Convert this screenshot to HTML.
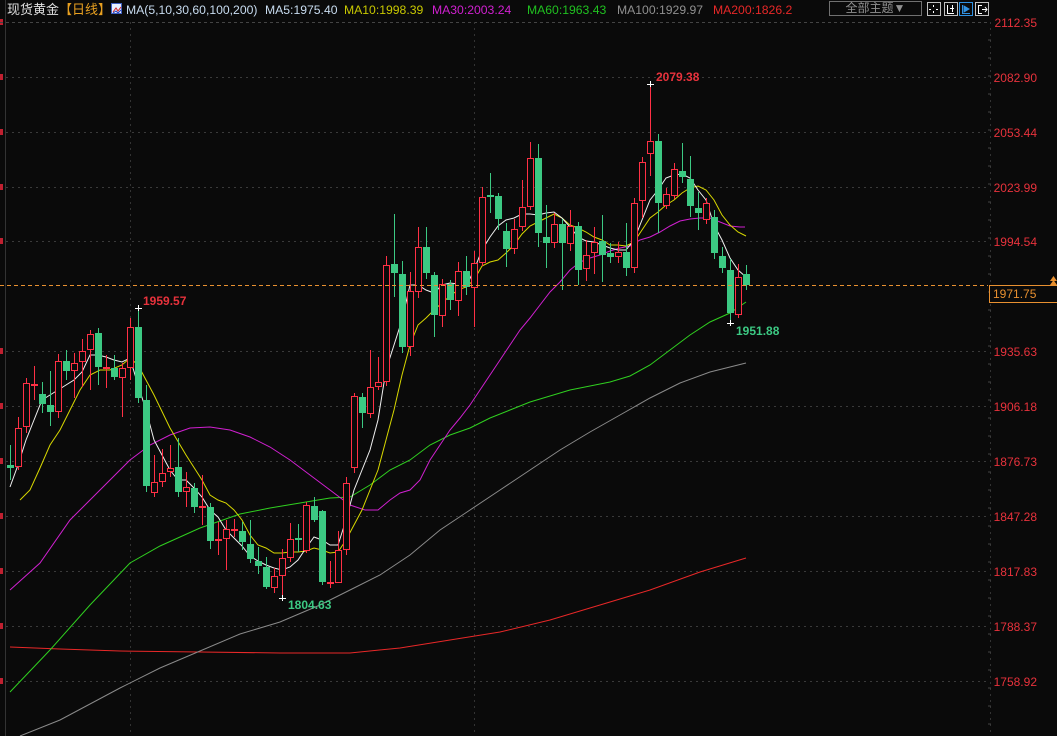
<!DOCTYPE html>
<html><head><meta charset="utf-8">
<style>
html,body{margin:0;padding:0;background:#0a0a0a;}
body{width:1057px;height:736px;overflow:hidden;position:relative;font-family:"Liberation Sans","Noto Sans CJK SC",sans-serif;}
svg{position:absolute;left:0;top:0;}
.t{position:absolute;top:2px;font-size:12.2px;white-space:nowrap;line-height:16px;}
</style></head><body>
<svg id="s" width="1057" height="736" xmlns="http://www.w3.org/2000/svg"></svg>
<div class="t" style="left:7px;color:#e0e0e0;font-size:13px">现货黄金<span style="color:#e8a020">【日线】</span></div>
<div style="position:absolute;left:111px;top:3px;width:11px;height:11px;background:#e8f0ff;border:1px solid #4060c0;box-sizing:border-box;"><svg width="11" height="11" style="position:absolute;left:0;top:0"><polyline points="1,8 4,4 6,7 9,3" stroke="#d02020" fill="none" stroke-width="1"/><polyline points="1,9 4,7 6,9 9,6" stroke="#2040c0" fill="none" stroke-width="1"/></svg></div>
<div class="t" style="left:126px;color:#c8dcf0">MA(5,10,30,60,100,200)</div>
<div class="t" style="left:265px;color:#c8dcf0">MA5:1975.40</div>
<div class="t" style="left:344px;color:#c8c800">MA10:1998.39</div>
<div class="t" style="left:432px;color:#d020d0">MA30:2003.24</div>
<div class="t" style="left:527px;color:#20c020">MA60:1963.43</div>
<div class="t" style="left:617px;color:#909090">MA100:1929.97</div>
<div class="t" style="left:713px;color:#e82828">MA200:1826.2</div>
<div style="position:absolute;left:829px;top:1px;width:93px;height:15px;border:1px solid #707070;box-sizing:border-box;color:#909090;font-size:12px;line-height:13px;text-align:center;font-family:'Liberation Sans','Noto Sans CJK SC',sans-serif;">全部主题▼</div>
<script>
var s=document.getElementById('s');var h='';
var H=[22,77,132,187,241,351,406,461,516,571,626,681];
var L=['2112.35','2082.90','2053.44','2023.99','1994.54','1935.63','1906.18','1876.73','1847.28','1817.83','1788.37','1758.92'];
for(var i=0;i<H.length;i++){h+='<line x1="6" y1="'+(H[i]+0.5)+'" x2="988" y2="'+(H[i]+0.5)+'" stroke="#3a3a3a" stroke-dasharray="2,4"/>';
h+='<text x="1037" y="'+(H[i]+5)+'" fill="#e8323c" font-size="12" text-anchor="end" font-family="Liberation Sans">'+L[i]+'</text>';
h+='<rect x="0" y="'+(H[i]-3)+'" width="3" height="6" fill="#c02030"/>';}
h+='<line x1="0" y1="22.5" x2="988" y2="22.5" stroke="#444" stroke-dasharray="3,3"/>';
h+='<line x1="130.5" y1="22" x2="130.5" y2="736" stroke="#333" stroke-dasharray="2,4"/>';
h+='<line x1="474.5" y1="22" x2="474.5" y2="736" stroke="#333" stroke-dasharray="2,4"/>';
h+='<line x1="5.5" y1="0" x2="5.5" y2="736" stroke="#333"/>';
h+='<line x1="990.5" y1="22" x2="990.5" y2="736" stroke="#333" stroke-dasharray="2,4"/>';
for(var y=40;y<736;y+=18){h+='<line x1="988" y1="'+y+'" x2="991" y2="'+y+'" stroke="#444"/>';}
function pl(p,c){h+='<polyline points="'+p+'" fill="none" stroke="'+c+'" stroke-width="1"/>';}
pl('10,647 60,649 120,651 200,652 280,653 350,653 400,648 450,640 500,632 550,620 600,605 650,590 700,572 746,558','#e82828');
pl('20,736 60,720 120,688 160,668 200,651 240,634 280,622 320,605 350,590 380,575 410,555 440,530 470,510 500,490 530,470 560,450 590,432 620,415 650,398 680,383 710,372 746,363','#8a8a8a');
pl('10,692 50,650 90,605 130,563 160,546 200,528 240,514 270,508 300,503 330,498 350,497 370,485 390,470 410,460 430,445 450,435 470,428 490,418 510,410 530,402 550,396 570,390 590,386 610,382 630,376 650,365 670,350 690,335 710,322 730,313 746,302','#30d020');
pl('10,590 40,563 70,520 90,500 110,480 130,460 150,445 170,435 190,428 210,427 230,430 250,437 270,447 290,460 310,475 330,490 350,505 365,510 378,510 390,500 400,493 410,490 420,480 430,460 440,445 450,430 460,418 470,405 480,390 490,375 500,360 510,345 520,330 530,318 540,305 550,292 560,282 570,270 580,262 590,258 600,255 610,251 620,248 630,246 640,240 650,237 660,232 670,226 680,221 690,219 700,218 710,218 720,222 730,226 740,227 745,227','#d020d0');
pl('20,500 30,490 40,468 50,445 60,430 70,410 80,390 90,375 100,370 110,370 122,365 130,358 138,365 146,380 154,395 170,428 186,455 202,480 210,495 218,500 226,503 234,510 242,520 250,535 258,545 266,548 274,553 282,553 290,552 298,552 306,551 314,548 322,550 330,553 338,552 346,540 354,525 362,510 370,490 378,470 386,440 394,410 402,375 410,345 418,325 426,318 434,310 442,303 450,296 458,290 466,287 474,280 482,266 490,262 498,260 506,253 514,245 522,234 530,226 538,222 546,218 554,214 562,218 570,225 578,228 586,232 594,237 602,240 610,245 618,245 626,246 634,242 642,230 650,218 658,212 666,205 674,200 682,193 690,188 698,186 706,190 714,200 722,215 730,225 738,232 746,236','#d8d800');
pl('10,487 18,465 26,440 34,420 42,400 50,395 58,390 66,385 74,380 82,372 90,355 98,355 106,357 114,360 122,362 130,358 138,385 146,410 154,440 162,455 170,470 178,480 186,480 194,488 202,497 210,510 218,517 226,530 234,538 242,546 250,556 258,561 266,565 274,568 282,570 290,567 298,560 306,548 314,537 322,540 330,545 338,545 346,520 354,490 362,470 370,450 378,420 386,370 394,345 402,320 410,285 418,285 426,290 434,293 442,285 450,283 458,284 466,287 474,270 482,250 490,237 498,226 506,220 514,218 522,214 530,214 538,215 546,213 554,212 562,218 570,227 578,237 586,241 594,242 602,245 610,248 618,250 626,250 634,240 642,220 650,200 658,190 666,178 674,175 682,174 690,178 698,190 706,200 714,225 722,240 730,258 738,270 746,277','#f0f0f0');
var C=[[0,465,468,445,480],[1,428,467,417,470],[1,383,427,378,433],[1,384,386,366,400],[0,394,404,382,413],[0,405,412,371,426],[1,361,412,354,418],[0,361,371,350,380],[1,363,371,353,398],[1,351,362,339,387],[1,334,350,330,390],[0,333,367,328,385],[1,367,369,355,388],[0,368,377,355,380],[1,368,378,363,417],[1,327,368,318,380],[0,327,398,308,403],
[0,400,486,385,492],[1,482,493,455,497],[1,473,482,449,487],[1,468,472,445,477],[0,467,492,438,497],[1,487,492,472,507],[0,488,507,483,513],[1,506,508,475,525],[0,507,541,503,549],[1,539,541,522,555],[1,529,539,520,570],[1,529,531,519,537],[0,531,542,522,550],[0,544,559,520,563],[0,561,566,547,574],[0,567,587,557,589],[1,576,588,568,593],[1,558,576,549,598],[1,539,558,523,562],[0,538,540,524,552],[1,505,551,502,553],[0,506,520,497,522],[0,511,582,510,585],[1,582,584,561,588],[1,550,583,531,583],[1,483,550,477,555],
[1,396,468,393,473],[0,397,413,393,428],[1,387,414,350,418],[1,382,387,357,390],[1,265,382,256,386],[0,264,273,214,297],[0,274,347,261,353],[1,291,347,272,356],[1,247,292,227,298],[0,247,273,227,279],[0,275,315,272,337],[1,284,316,279,327],[0,284,300,280,310],[1,271,301,262,316],[0,271,287,256,295],[1,263,288,251,327],[1,197,263,187,266],[0,195,197,173,213],[0,196,219,193,230],[0,231,249,223,267],[1,229,249,219,254],[1,207,227,180,231],[1,158,207,142,210],[0,158,233,144,247],[0,237,243,205,268],[1,224,243,213,248],
[0,224,243,219,290],[1,226,244,210,251],[0,226,270,222,285],[1,255,269,240,281],[1,242,253,227,274],[0,241,255,215,282],[0,253,257,243,263],[1,252,257,242,263],[0,252,268,223,276],[1,203,268,198,273],[1,162,201,157,218],[1,141,154,84,176],[0,141,203,134,233],[1,194,206,188,209],[1,169,196,163,199],[0,171,177,143,183],[0,179,206,156,217],[0,208,213,192,230],[1,203,220,198,224],[0,217,253,210,259],[0,256,268,247,273],[0,270,313,259,323],[1,277,315,264,318],[0,274,285,265,290]];
for(var i=0;i<C.length;i++){var c=C[i];var x=10+i*8;var col=c[0]?'#ff3045':'#3cc983';
h+='<line x1="'+(x+0.5)+'" y1="'+c[3]+'" x2="'+(x+0.5)+'" y2="'+c[1]+'" stroke="'+col+'"/>';
h+='<line x1="'+(x+0.5)+'" y1="'+c[2]+'" x2="'+(x+0.5)+'" y2="'+c[4]+'" stroke="'+col+'"/>';
var bh=Math.max(1,c[2]-c[1]);
if(c[0]){h+='<rect x="'+(x-2.5)+'" y="'+(c[1]+0.5)+'" width="6" height="'+Math.max(0.5,bh-1)+'" fill="#0a0a0a" stroke="'+col+'"/>';}
else{h+='<rect x="'+(x-3)+'" y="'+c[1]+'" width="7" height="'+bh+'" fill="'+col+'"/>';}}
function mk(x,y){h+='<line x1="'+(x-3)+'" y1="'+(y+0.5)+'" x2="'+(x+4)+'" y2="'+(y+0.5)+'" stroke="#fff"/><line x1="'+(x+0.5)+'" y1="'+(y-3)+'" x2="'+(x+0.5)+'" y2="'+(y+3)+'" stroke="#fff"/>';}
mk(138,308);mk(282,598);mk(650,84);mk(730,323);
h+='<text x="143" y="305" fill="#e8323c" font-size="12" font-weight="bold" font-family="Liberation Sans">1959.57</text>';
h+='<text x="288" y="609" fill="#3cc983" font-size="12" font-weight="bold" font-family="Liberation Sans">1804.63</text>';
h+='<text x="656" y="81" fill="#e8323c" font-size="12" font-weight="bold" font-family="Liberation Sans">2079.38</text>';
h+='<text x="736" y="335" fill="#3cc983" font-size="12" font-weight="bold" font-family="Liberation Sans">1951.88</text>';
h+='<line x1="0" y1="285.5" x2="988" y2="285.5" stroke="#e89030" stroke-dasharray="4,3"/>';
h+='<rect x="989.5" y="285.5" width="68" height="17" fill="#0a0a0a" stroke="#e89030"/>';
h+='<text x="993" y="298" fill="#e89030" font-size="12" font-family="Liberation Sans">1971.75</text>';
h+='<path d="M1050,281 L1053.5,276 L1057,281 Z M1050,285 L1053.5,280 L1057,285 Z" fill="#e89030"/>';
var ix=[927,944,959,975];
for(var k=0;k<4;k++){var bc=k==2?'#3090e0':'#c0c0c0';h+='<rect x="'+(ix[k]+0.5)+'" y="2.5" width="13" height="13" fill="#0a0a0a" stroke="'+bc+'"/>';}
h+='<path d="M933.5,5 v2 M933.5,11 v2 M929,9.5 h2 M936,9.5 h2" stroke="#fff"/>';
h+='<path d="M947.5,5 v9 M947,13.5 h7 M950,8.5 h4 M952.5,5 v7" stroke="#fff"/>';
h+='<path d="M962.5,5 v9 M962,13.5 h8 M964,6 L969,9 L964,12 Z" stroke="#3090e0" fill="#3090e0"/>';
h+='<path d="M978.5,5 v9 M978,5.5 h4 M978,13.5 h4 M982,9.5 h5 M985,7 l2,2.5 l-2,2.5" stroke="#fff" fill="none"/>';
s.innerHTML=h;
</script>
</body></html>
